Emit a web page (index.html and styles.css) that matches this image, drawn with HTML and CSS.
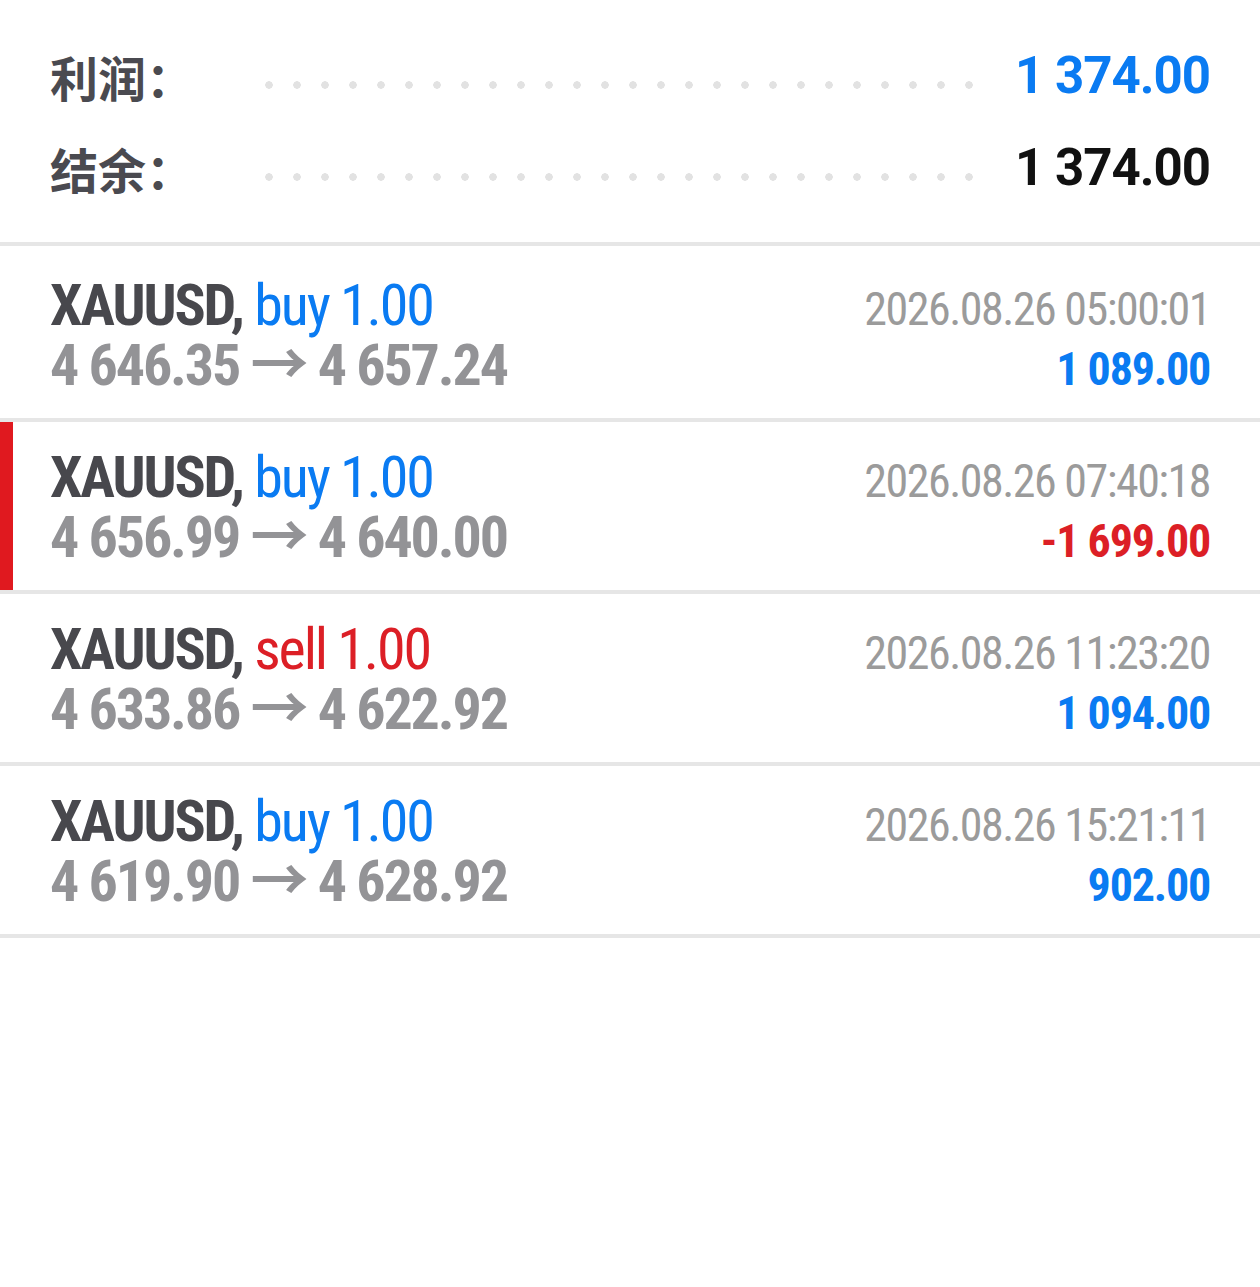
FILE: index.html
```html
<!DOCTYPE html>
<html lang="zh-CN">
<head>
    <meta charset="UTF-8">
    <meta name="viewport" content="width=device-width, initial-scale=1.0">
    <title>History</title>
    <link rel="stylesheet" href="styles.css">
</head>
<body>
    <div class="summary">
        <div class="summary-row">
            <span class="summary-label">利润：</span>
            <span class="dots"></span>
            <span class="summary-value blue">1 374.00</span>
        </div>
        <div class="summary-row">
            <span class="summary-label">结余：</span>
            <span class="dots"></span>
            <span class="summary-value">1 374.00</span>
        </div>
    </div>

    <div class="deals">
        <div class="deal">
            <div class="deal-line">
                <span class="deal-title">XAUUSD, <span class="blue">buy 1.00</span></span>
                <span class="deal-time">2026.08.26 05:00:01</span>
            </div>
            <div class="deal-line">
                <span class="deal-prices">4 646.35 → 4 657.24</span>
                <span class="deal-profit blue">1 089.00</span>
            </div>
        </div>
        <div class="deal deal-marked">
            <div class="deal-line">
                <span class="deal-title">XAUUSD, <span class="blue">buy 1.00</span></span>
                <span class="deal-time">2026.08.26 07:40:18</span>
            </div>
            <div class="deal-line">
                <span class="deal-prices">4 656.99 → 4 640.00</span>
                <span class="deal-profit red">-1 699.00</span>
            </div>
        </div>
        <div class="deal">
            <div class="deal-line">
                <span class="deal-title">XAUUSD, <span class="red">sell 1.00</span></span>
                <span class="deal-time">2026.08.26 11:23:20</span>
            </div>
            <div class="deal-line">
                <span class="deal-prices">4 633.86 → 4 622.92</span>
                <span class="deal-profit blue">1 094.00</span>
            </div>
        </div>
        <div class="deal">
            <div class="deal-line">
                <span class="deal-title">XAUUSD, <span class="blue">buy 1.00</span></span>
                <span class="deal-time">2026.08.26 15:21:11</span>
            </div>
            <div class="deal-line">
                <span class="deal-prices">4 619.90 → 4 628.92</span>
                <span class="deal-profit blue">902.00</span>
            </div>
        </div>
    </div>
</body>
</html>
```

FILE: styles.css
```css
body {
    margin: 0;
    padding: 0;
    background-color: #ffffff;
    font-family: "Roboto Condensed", Roboto, "Noto Sans CJK SC", sans-serif;
}
.blue {
    color: #0a7bf2;
}
.red {
    color: #dc1f26;
}

/* summary block */
.summary {
    padding: 30px 50px 28px 50px;
    border-bottom: 4px solid #e6e6e6;
}
.summary-row {
    display: flex;
    align-items: center;
    height: 92px;
}
.summary-label {
    width: 203px;
    font-family: "Noto Sans CJK SC", sans-serif;
    font-weight: 700;
    font-size: 48px;
    color: #4a4a50;
}
.dots {
    align-self: stretch;
    width: 728px;
    background-image: radial-gradient(circle, #e2e2e2 3.5px, transparent 4px);
    background-size: 28px 8px;
    background-position: 2px 51px;
    background-repeat: repeat-x;
}
.summary-value {
    flex: 1;
    text-align: right;
    font-family: Roboto, sans-serif;
    font-weight: 700;
    font-size: 51px;
    letter-spacing: -1px;
    line-height: 92px;
    color: #111111;
}
.summary-value.blue {
    color: #0a7bf2;
}

/* deals list */
.deals {
    padding-top: 4px;
}
.deal {
    box-sizing: border-box;
    height: 172px;
    padding: 25px 50px 0 50px;
    border-bottom: 4px solid #e6e6e6;
}
.deal-marked {
    box-shadow: inset 13px 0 0 #e0191f;
}
.deal-line {
    display: flex;
    justify-content: space-between;
    align-items: flex-start;
    height: 60px;
}
.deal-title {
    font-size: 58px;
    line-height: 60px;
    font-weight: 700;
    letter-spacing: -2.1px;
    color: #48484d;
}
.deal-title span {
    display: inline-block;
    font-weight: 400;
}
.deal-prices {
    font-size: 58px;
    line-height: 60px;
    font-weight: 700;
    letter-spacing: -2.1px;
    color: #939396;
}
.deal-time {
    padding-top: 8px;
    font-size: 46px;
    line-height: 52px;
    letter-spacing: -1.5px;
    color: #9b9b9b;
}
.deal-profit {
    padding-top: 8px;
    font-size: 46px;
    line-height: 52px;
    font-weight: 700;
    letter-spacing: -1.2px;
}
```
